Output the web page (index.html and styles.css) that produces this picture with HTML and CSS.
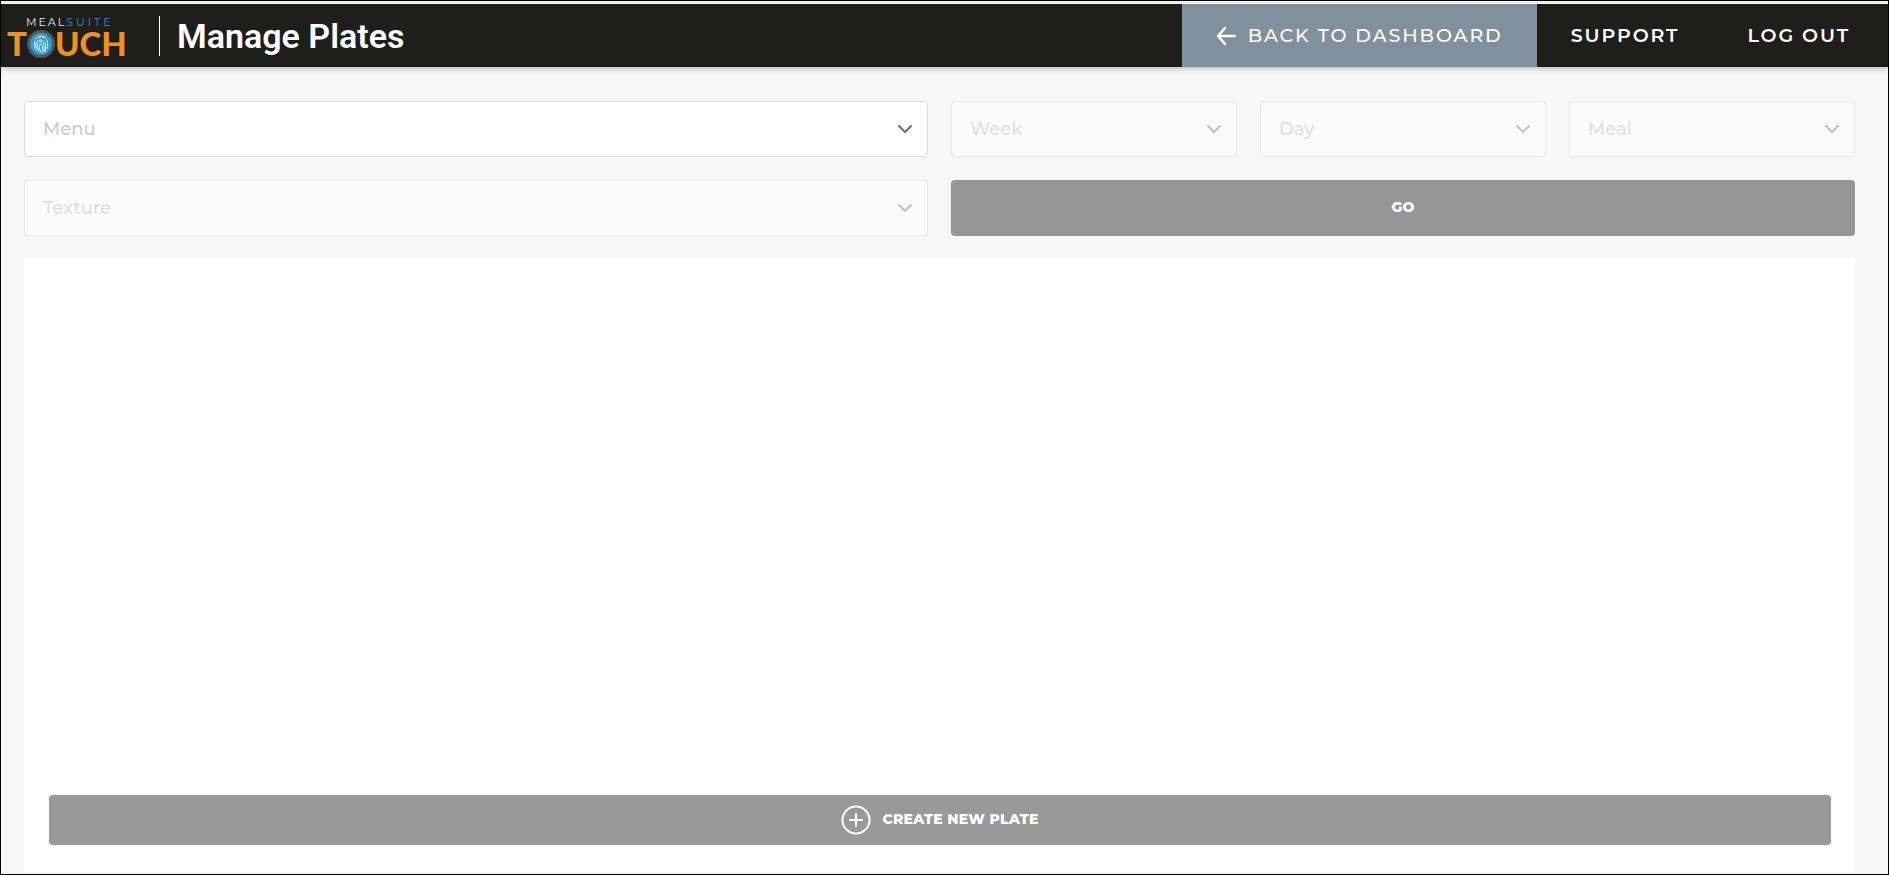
FILE: index.html
```html
<!DOCTYPE html>
<html lang="en">
<head>
  <meta charset="UTF-8">
  <meta name="viewport" content="width=device-width, initial-scale=1.0">
  <title>Manage Plates</title>
  <link rel="stylesheet" href="styles.css">
</head>
<body>
  <header class="topbar">
    <a class="logo" href="#" aria-label="MealSuite Touch">
      <svg width="122" height="56" viewBox="0 0 122 56">
        <text class="logo-small" x="19" y="18" fill="#e8e8e8">MEAL<tspan class="logo-suite" fill="#2f8fc0">SUITE</tspan></text>
        <text class="logo-big" x="0" y="48">T</text>
        <text class="logo-big" x="48" y="48">UCH</text>
        <circle cx="34" cy="36" r="12.5" fill="#2a9fd8" stroke="#555658" stroke-width="3"/>
        <g fill="none" stroke="#e4f4fb" stroke-width="1" stroke-linecap="round">
          <path d="M29 31c2-3 8-3.600 10.500.5 1.500 3 1.600 6 .6 9"/>
          <path d="M28 40c-1-3-1-5 0-7"/>
          <path d="M29.500 41.500c-1.500-5-.5-9 3.500-9.500 5-.3 6.500 5 5.500 11"/>
          <path d="M31.500 43c-1.500-4-1.500-8 1.500-9 4-.6 4.500 5 4 10"/>
          <path d="M33.500 44c-1-3-1.800-7 0-7.800 2-.2 2 4 2 8"/>
          <path d="M31 29.200c2-1 5-1 7 .2"/>
        </g>
      </svg>
    </a>
    <h1 class="title">Manage Plates</h1>
    <nav class="nav">
      <a class="nav-link active" href="#">
        <svg width="20" height="20" viewBox="0 0 20 20" fill="none" stroke="currentColor" stroke-width="2.400" stroke-linecap="round" stroke-linejoin="round">
          <path d="M9 2L2 10l7 8M2 10h17"/>
        </svg>
        BACK TO DASHBOARD
      </a>
      <a class="nav-link" href="#">SUPPORT</a>
      <a class="nav-link" href="#">LOG OUT</a>
    </nav>
  </header>

  <main class="content">
    <form class="filters">
      <div class="field">
        <select aria-label="Menu"><option>Menu</option></select>
        <svg class="chevron" width="14" height="8" viewBox="0 0 14 8"><path d="M.5.500L7 7 13.500.5"/></svg>
      </div>
      <div class="filters-small">
        <div class="field disabled">
          <select aria-label="Week" disabled><option>Week</option></select>
          <svg class="chevron" width="14" height="8" viewBox="0 0 14 8"><path d="M.5.500L7 7 13.500.5"/></svg>
        </div>
        <div class="field disabled">
          <select aria-label="Day" disabled><option>Day</option></select>
          <svg class="chevron" width="14" height="8" viewBox="0 0 14 8"><path d="M.5.500L7 7 13.500.5"/></svg>
        </div>
        <div class="field disabled">
          <select aria-label="Meal" disabled><option>Meal</option></select>
          <svg class="chevron" width="14" height="8" viewBox="0 0 14 8"><path d="M.5.500L7 7 13.500.5"/></svg>
        </div>
      </div>
      <div class="field disabled">
        <select aria-label="Texture" disabled><option>Texture</option></select>
        <svg class="chevron" width="14" height="8" viewBox="0 0 14 8"><path d="M.5.500L7 7 13.500.5"/></svg>
      </div>
      <button class="btn btn-go" type="submit" disabled>GO</button>
    </form>

    <section class="plates">
      <button class="btn btn-create" type="button" disabled>
        <svg width="30" height="30" viewBox="0 0 30 30" fill="none" stroke="currentColor" stroke-width="2" stroke-linecap="round">
          <circle cx="15" cy="15" r="13.500"/>
          <path d="M15 9v12M9 15h12"/>
        </svg>
        <span>CREATE NEW PLATE</span>
      </button>
    </section>
  </main>
</body>
</html>
```

FILE: styles.css
```css
* {
  box-sizing: border-box;
}
body {
  margin: 0;
  min-height: 100vh;
  display: flex;
  flex-direction: column;
  border: 1px solid #000;
  background: #f7f7f7;
  font-family: Montserrat, Inter, "Open Sans", sans-serif;
}

/* top bar */
.topbar {
  display: flex;
  align-items: stretch;
  height: 66px;
  border-top: 3px solid #f4f1f4;
  background: #1e1e1c;
  color: #fff;
  box-shadow: 0 1px 6px rgba(0, 0, 0, 0.3);
}
.logo {
  display: flex;
  align-items: center;
  padding-left: 6px;
}
.logo svg {
  overflow: visible;
}
.logo-small {
  font-size: 11px;
  letter-spacing: 2px;
}
.logo-suite {
  letter-spacing: 3px;
}
.logo-big {
  font-family: Lato, sans-serif;
  font-size: 33px;
  font-weight: 900;
  fill: #f0901f;
}
.title {
  align-self: center;
  margin: 0 0 0 30px;
  padding-left: 17px;
  border-left: 1px solid #fff;
  font-family: Roboto, sans-serif;
  font-size: 34px;
  font-weight: 600;
  line-height: 40px;
}
.nav {
  display: flex;
  margin-left: auto;
  padding-right: 4px;
}
.nav-link {
  display: flex;
  align-items: center;
  gap: 12px;
  padding: 0 34px;
  color: #fff;
  font-size: 19px;
  font-weight: 600;
  letter-spacing: 0.1em;
  text-decoration: none;
}
.nav-link.active {
  background: #80919d;
  font-weight: 500;
}

/* filters */
.content {
  flex: 1;
  display: flex;
  flex-direction: column;
  gap: 22px;
  padding: 34px 33px 2px 23px;
}
.filters {
  display: grid;
  grid-template-columns: 1fr 1fr;
  gap: 23px;
}
.filters-small {
  display: grid;
  grid-template-columns: repeat(3, 1fr);
  gap: 23px;
}
.field {
  display: grid;
  align-items: center;
}
.field select,
.chevron {
  grid-area: 1 / 1;
}
.field select {
  appearance: none;
  width: 100%;
  height: 56px;
  padding: 0 48px 0 18px;
  border: 1px solid #dedede;
  border-radius: 4px;
  background: #fff;
  color: #cbcbcb;
  font-family: inherit;
  font-size: 18px;
  font-weight: 500;
}
.field.disabled select {
  opacity: 0.5;
}
.field.disabled .chevron {
  opacity: 0.4;
}
.chevron {
  justify-self: end;
  margin-right: 16px;
  fill: none;
  stroke: #6e6e6e;
  stroke-width: 2;
  pointer-events: none;
}

.btn {
  display: flex;
  align-items: center;
  justify-content: center;
  gap: 11px;
  padding: 0 0 2px;
  border: none;
  border-radius: 4px;
  background: #999;
  color: #fff;
  font-family: inherit;
  font-size: 14px;
  font-weight: 800;
  letter-spacing: 0.02em;
}
.btn-go {
  background: #969696;
}

/* plates */
.plates {
  flex: 1;
  display: flex;
  flex-direction: column;
  justify-content: flex-end;
  padding: 25px 24px 27px 25px;
  background: #fff;
}
.btn-create {
  height: 50px;
  padding: 0;
}
.btn-create span {
  padding-bottom: 2px;
}
```
